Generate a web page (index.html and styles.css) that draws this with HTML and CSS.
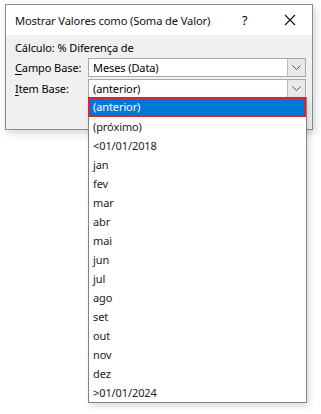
FILE: index.html
```html
<!DOCTYPE html>
<html lang="pt">
<head>
  <meta charset="UTF-8" />
  <meta name="viewport" content="width=device-width, initial-scale=1" />
  <title>Mostrar Valores como</title>
  <link rel="stylesheet" href="styles.css">
</head>
<body>

<div class="dialog">
  <div class="titlebar">
    <span class="title">Mostrar Valores como (Soma de Valor)</span>
    <span class="help">?</span>
    <span class="close">
      <svg width="12" height="12" viewBox="0 0 12 12"><path d="M1 1 L11 11 M11 1 L1 11" stroke="#111" stroke-width="1.1" fill="none"/></svg>
    </span>
  </div>
  <div class="content">
    <div class="calc">Cálculo: % Diferença de</div>
    <div class="row">
      <label><u>C</u>ampo Base:</label>
      <div class="combo">
        <span class="value">Meses (Data)</span>
        <span class="arrow"><svg width="9" height="5" viewBox="0 0 9 5"><path d="M0.5 0.5 L4.5 4.5 L8.5 0.5" stroke="#555" stroke-width="1" fill="none"/></svg></span>
      </div>
    </div>
    <div class="row">
      <label><u>I</u>tem Base:</label>
      <div class="combo">
        <span class="value">(anterior)</span>
        <span class="arrow"><svg width="9" height="5" viewBox="0 0 9 5"><path d="M0.5 0.5 L4.5 4.5 L8.5 0.5" stroke="#555" stroke-width="1" fill="none"/></svg></span>
      </div>
    </div>
  </div>
</div>

<ul class="dropdown">
  <li class="selected">(anterior)</li>
  <li>(próximo)</li>
  <li>&lt;01/01/2018</li>
  <li>jan</li>
  <li>fev</li>
  <li>mar</li>
  <li>abr</li>
  <li>mai</li>
  <li>jun</li>
  <li>jul</li>
  <li>ago</li>
  <li>set</li>
  <li>out</li>
  <li>nov</li>
  <li>dez</li>
  <li>&gt;01/01/2024</li>
</ul>

</body>
</html>
```

FILE: styles.css
```css
body {
  margin: 0;
  background: #fff;
  font-family: "Noto Sans", "Open Sans", sans-serif;
  font-size: 11px;
  letter-spacing: -0.1px;
  color: #000;
  position: relative;
  height: 414px;
  overflow: hidden;
}
.dialog {
  margin: 4px 0 0 5px;
  width: 306px;
  border: 1px solid #8c8c8c;
  box-shadow: 2px 3px 8px rgba(0,0,0,0.18);
}
.titlebar {
  height: 30px;
  background: #fff;
  display: flex;
  align-items: center;
  padding-left: 9px;
  white-space: nowrap;
}
.title {
  flex: 1;
  font-size: 11.2px;
  letter-spacing: -0.15px;
  color: #111;
}
.help {
  width: 20px;
  font-size: 12.5px;
  margin-right: 22px;
}
.close {
  width: 28px;
  display: flex;
  align-items: center;
}
.content {
  background: #f0f0f0;
  height: 94px;
  padding: 4px 6px 0 9px;
  box-sizing: border-box;
}
.calc {
  height: 17px;
  line-height: 17px;
}
.row {
  display: flex;
  align-items: center;
  margin-top: 2px;
  white-space: nowrap;
}
.row label {
  width: 73px;
  flex-shrink: 0;
}
.row label u {
  text-decoration-thickness: 1px;
  text-underline-offset: 2px;
}
.combo {
  flex: 1;
  height: 19px;
  box-sizing: border-box;
  border: 1px solid #a8a8a8;
  background: #fff;
  display: flex;
  align-items: center;
}
.combo .value {
  flex: 1;
  padding-left: 4px;
}
.arrow {
  width: 18px;
  height: 17px;
  box-sizing: border-box;
  background: #e8e8e8;
  border-left: 1px solid #bcbcbc;
  display: flex;
  align-items: center;
  justify-content: center;
}
.dropdown {
  position: absolute;
  top: 97px;
  left: 88px;
  width: 219px;
  margin: 0;
  padding: 0;
  list-style: none;
  background: #fff;
  border: 1px solid #828282;
  border-top: none;
  box-sizing: border-box;
  box-shadow: 2px 3px 6px rgba(0,0,0,0.15);
}
.dropdown li {
  height: 19px;
  line-height: 19px;
  padding-left: 4px;
  color: #222;
}
.dropdown li.selected {
  background: #0078d7;
  color: #fff;
  margin-left: -1px;
  padding-left: 5px;
  outline: 2px solid #d9262e;
  outline-offset: -2px;
  height: 20px;
  line-height: 20px;
}
```
